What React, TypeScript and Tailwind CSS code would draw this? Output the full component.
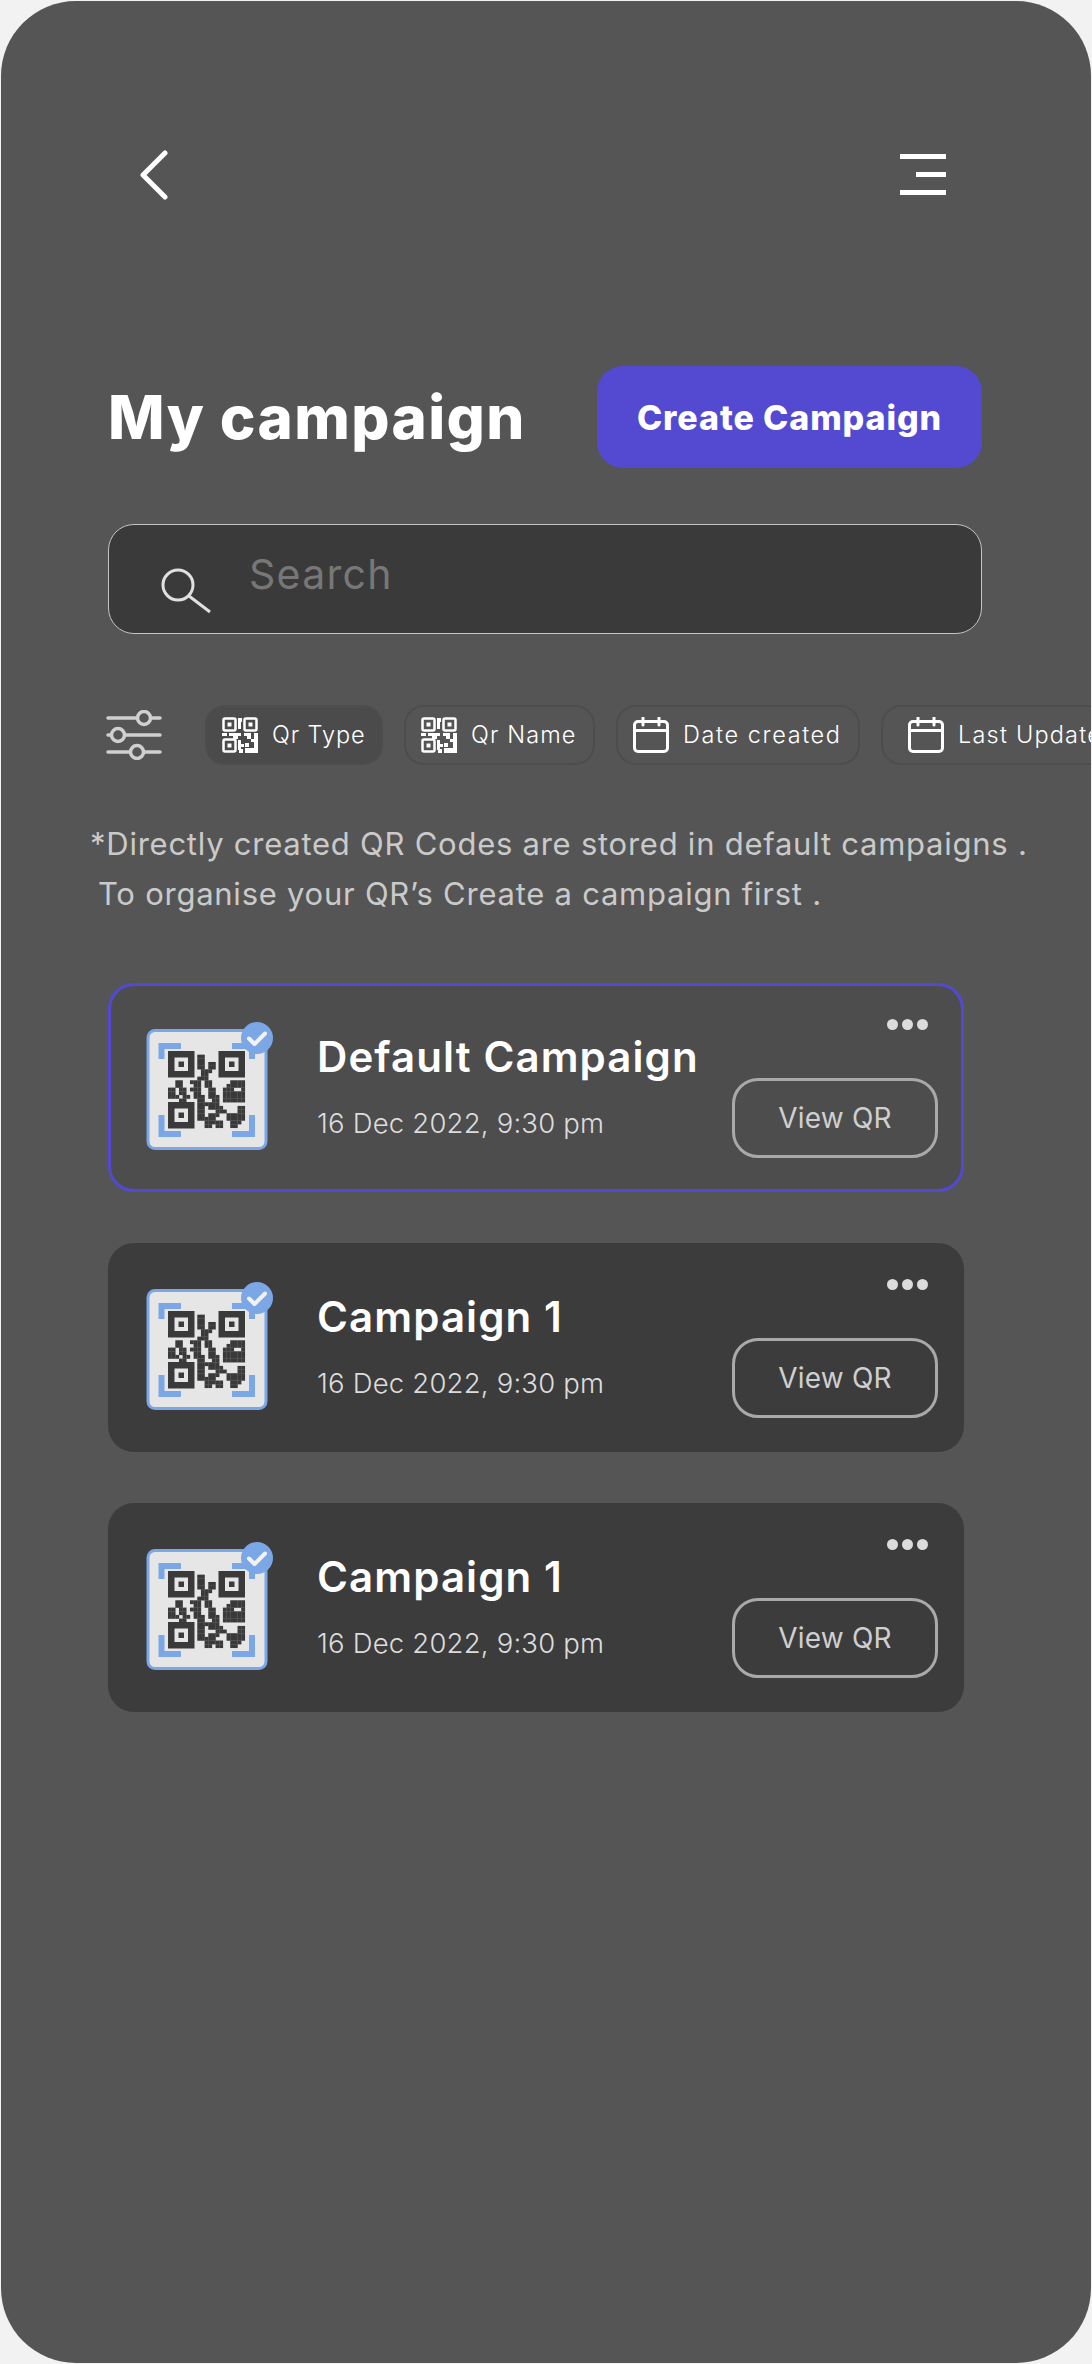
import React from "react";

const MATRIX = [
  "....................",
  "........11...........",
  "........11...........",
  "........11.11........",
  "........11.11........",
  ".........111.........",
  ".........11..........",
  "........111..........",
  "..11..111.11.....1111",
  "..11...11.11....11111",
  "11.11.111..11..111..1",
  "11.11..11..11..111111",
  "111.11.111.111.111111",
  "...11...11..11.111111",
  "........111111.......",
  "........11.1111....11",
  "........11...111...11",
  "........11.111..11111",
  "........11111...11111",
  "..........11111..111.",
  "..........11.11..11..",
];

function Finder({ x, y }: { x: number; y: number }) {
  return (
    <g>
      <rect x={x} y={y} width="26.5" height="26.5" fill="#3a3a3a" />
      <rect x={x + 6.5} y={y + 6.5} width="13.5" height="13.5" fill="#e6e6e6" />
      <rect x={x + 10.5} y={y + 10.5} width="5.5" height="5.5" fill="#3a3a3a" />
    </g>
  );
}

function QrThumb() {
  const m = 3.66;
  return (
    <svg width="140" height="140" viewBox="0 0 140 140" className="shrink-0">
      <rect x="8" y="15.5" width="118" height="118" rx="7" fill="#e6e6e6" stroke="#7ba7e6" strokeWidth="3" />
      <path d="M21.5 44V31H41" fill="none" stroke="#7ba7e6" strokeWidth="6" />
      <path d="M92 31H112V44" fill="none" stroke="#7ba7e6" strokeWidth="6" />
      <path d="M21.5 100V119H41" fill="none" stroke="#7ba7e6" strokeWidth="6" />
      <path d="M92 119H112V100" fill="none" stroke="#7ba7e6" strokeWidth="6" />
      <Finder x={28} y={36} />
      <Finder x={78.5} y={36} />
      <Finder x={28} y={87} />
      <g fill="#3a3a3a">
        {MATRIX.flatMap((row, r) =>
          row.split("").map((c, i) =>
            c === "1" ? <rect key={`${r}-${i}`} x={28 + i * m} y={36 + r * m} width={m + 0.2} height={m + 0.2} /> : null
          )
        )}
      </g>
      <circle cx="117" cy="23" r="16" fill="#7ba7e6" />
      <path d="M109 23.5L114.5 29L125 18.5" fill="none" stroke="#f2f2f2" strokeWidth="4" strokeLinecap="round" strokeLinejoin="round" />
    </svg>
  );
}

function QrSmall() {
  return (
    <svg width="36" height="36" viewBox="0 0 36 36" className="shrink-0">
      <g fill="none" stroke="#fff" strokeWidth="2.5">
        <rect x="1.5" y="1.5" width="12" height="12" rx="1.5" />
        <rect x="22.5" y="1.5" width="12" height="12" rx="1.5" />
        <rect x="1.5" y="22.5" width="12" height="12" rx="1.5" />
      </g>
      <g fill="#fff">
        <rect x="5.5" y="5.5" width="4" height="4" />
        <rect x="26.5" y="5.5" width="4" height="4" />
        <rect x="5.5" y="26.5" width="4" height="4" />
        <rect x="16" y="1" width="4" height="4" />
        <rect x="16" y="5" width="3" height="7" />
        <rect x="0" y="16" width="5" height="3" />
        <rect x="7" y="16" width="12" height="3" />
        <rect x="11" y="19" width="5" height="3" />
        <rect x="22" y="16" width="7" height="3" />
        <rect x="32" y="16" width="4" height="6" />
        <rect x="25" y="19" width="4" height="3" />
        <rect x="29" y="22" width="7" height="3" />
        <rect x="16" y="23" width="3" height="10" />
        <rect x="19" y="27" width="3" height="3" />
        <rect x="23" y="31" width="13" height="5" />
        <rect x="32" y="25" width="4" height="6" />
        <rect x="23" y="26" width="4" height="4" />
        <rect x="17" y="32" width="4" height="4" />
      </g>
    </svg>
  );
}

function Calendar() {
  return (
    <svg width="36" height="36" viewBox="0 0 36 36" fill="none" stroke="#fff" strokeWidth="3" className="shrink-0">
      <rect x="1.5" y="4.5" width="33" height="30" rx="3.5" />
      <path d="M1.5 13.5H34.5" />
      <path d="M10 0.5V8M26 0.5V8" strokeLinecap="round" />
    </svg>
  );
}

function Chip({ icon, label, filled, className, textClass }: { icon: React.ReactNode; label: string; filled?: boolean; className: string; textClass: string }) {
  return (
    <div
      className={`flex h-[60px] shrink-0 items-center gap-[14px] rounded-[20px] border-2 border-[#4d4d4d] text-[23.5px] font-light text-white ${
        filled ? "bg-[#4b4b4b]" : ""
      } ${className}`}
    >
      {icon}
      <span className={`whitespace-nowrap ${textClass}`}>{label}</span>
    </div>
  );
}

function Card({ title, active }: { title: string; active?: boolean }) {
  return (
    <div
      className={`flex h-[209px] w-[856px] rounded-[26px] border-[3px] pl-[29px] pr-[23px] pt-[29px] ${
        active ? "border-[#544ad1] bg-[#4d4d4d]" : "border-transparent bg-[#3c3c3c]"
      }`}
    >
      <QrThumb />
      <div className="ml-[37px] flex flex-col pt-[14px]">
        <div className="h-[56px] text-[42px] font-semibold leading-[56px] tracking-[1.1px] text-white whitespace-nowrap">{title}</div>
        <div className="mt-[18px] h-[40px] text-[27.5px] font-light leading-[40px] tracking-[0.2px] text-[#dcdcdc] whitespace-nowrap">
          16 Dec 2022, 9:30 pm
        </div>
      </div>
      <div className="ml-auto flex flex-col items-end pt-[4px]">
        <div className="mr-[10px] flex h-[12px] gap-[4px]">
          <span className="h-[11px] w-[11px] rounded-full bg-[#dcdcdc]" />
          <span className="h-[11px] w-[11px] rounded-full bg-[#dcdcdc]" />
          <span className="h-[11px] w-[11px] rounded-full bg-[#dcdcdc]" />
        </div>
        <div className="mt-[47px] flex h-[80px] w-[206px] items-center justify-center rounded-[26px] border-[3px] border-[#a9a9a9] text-[28px] leading-none tracking-[0.2px] text-[#cfcfcf]">
          View QR
        </div>
      </div>
    </div>
  );
}

export default function App() {
  return (
    <div className="h-[2364px] w-[1092px] overflow-hidden bg-[#f2f2f2] font-[Inter,sans-serif]">
      <div className="mx-px mt-px h-[2362px] overflow-hidden rounded-[75px] bg-[#555555] pl-[107px] pt-[149px]">
        <div className="flex w-[838px] items-start justify-between pl-[31px]">
          <svg width="30" height="50" viewBox="0 0 30 50" fill="none" stroke="#fff" strokeWidth="5" strokeLinecap="round" strokeLinejoin="round">
            <path d="M26 3L4 25L26 47" />
          </svg>
          <svg width="46" height="42" viewBox="0 0 46 42" fill="#fff" className="mt-[4px]">
            <rect x="0" y="0" width="46" height="5" />
            <rect x="16" y="18" width="30" height="5" />
            <rect x="0" y="36" width="46" height="5" />
          </svg>
        </div>

        <div className="mt-[166px] flex h-[102px] w-[874px] items-center justify-between">
          <h1 className="text-[60px] font-extrabold tracking-[1.4px] text-white whitespace-nowrap">My campaign</h1>
          <div className="flex h-[102px] w-[385px] items-center justify-center rounded-[26px] bg-[#544ad1] text-[34px] font-extrabold tracking-[0.9px] text-white whitespace-nowrap">
            Create Campaign
          </div>
        </div>

        <div className="mt-[56px] flex h-[110px] w-[874px] items-start rounded-[26px] border-[1.5px] border-[#c4c4c4] bg-[#3a3a3a] pl-[52px]">
          <svg width="52" height="46" viewBox="0 0 52 46" fill="none" stroke="#e0e0e0" strokeWidth="3" className="mt-[43px] shrink-0">
            <circle cx="17" cy="17" r="15" />
            <path d="M28 28L49 44" />
          </svg>
          <span className="ml-[36px] mt-[22px] text-[41px] leading-[54px] tracking-[1.3px] text-[#777777]">Search</span>
        </div>

        <div className="mt-[71px] flex h-[60px] items-center">
          <svg width="56" height="50" viewBox="0 0 56 50" fill="none" stroke="#d0d0d0" strokeWidth="3.5" strokeLinecap="round" className="ml-[-2px] shrink-0">
            <path d="M2 8H31M45 8H54" />
            <circle cx="38" cy="8" r="6.5" />
            <path d="M2 25H5M19 25H54" />
            <circle cx="12" cy="25" r="6.5" />
            <path d="M2 42H24M38 42H54" />
            <circle cx="31" cy="42" r="6.5" />
          </svg>
          <div className="ml-[43px] flex gap-[21px]">
            <Chip icon={<QrSmall />} label="Qr Type" filled className="w-[178px] pl-[15px]" textClass="tracking-[0.9px]" />
            <Chip icon={<QrSmall />} label="Qr Name" className="w-[191px] pl-[15px]" textClass="tracking-[1.1px]" />
            <Chip icon={<Calendar />} label="Date created" className="w-[244px] pl-[15px]" textClass="tracking-[1.6px]" />
            <Chip icon={<Calendar />} label="Last Updated" className="w-[250px] pl-[25px]" textClass="tracking-[1.2px]" />
          </div>
        </div>

        <div className="ml-[-18px] mt-[54px] text-[31px] leading-[50px] tracking-[0.75px] text-[#cacaca]">
          <div className="whitespace-nowrap">*Directly created QR Codes are stored in default campaigns .</div>
          <div className="ml-[8px] whitespace-nowrap">To organise your QR’s Create a campaign first .</div>
        </div>

        <div className="mt-[64px] flex flex-col gap-[51px]">
          <Card title="Default Campaign" active />
          <Card title="Campaign 1" />
          <Card title="Campaign 1" />
        </div>
      </div>
    </div>
  );
}
